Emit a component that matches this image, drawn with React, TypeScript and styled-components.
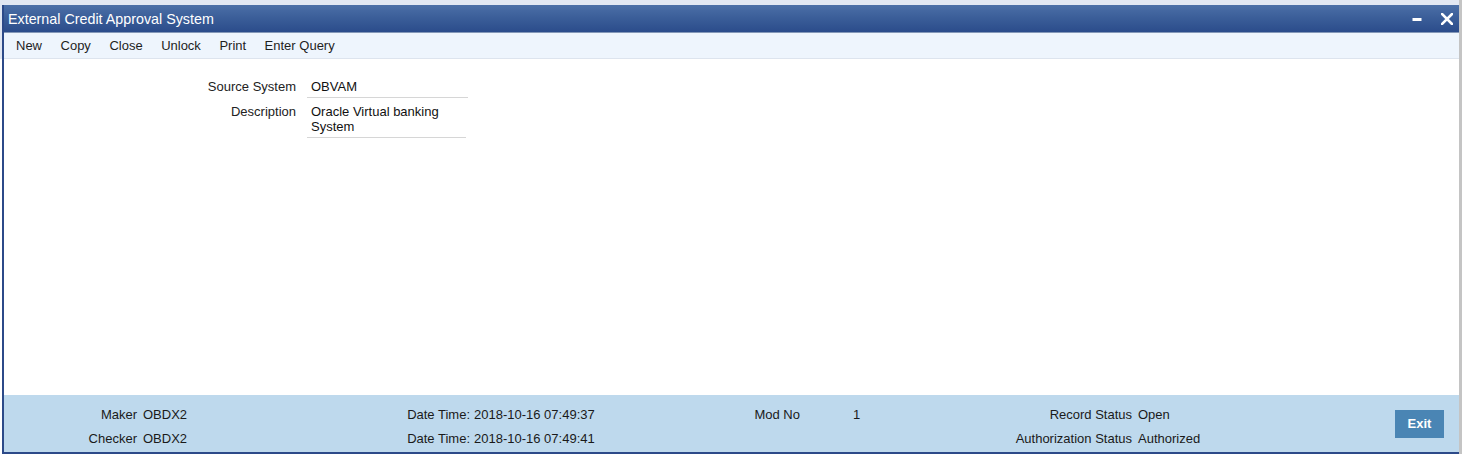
import React from "react";
import styled, { createGlobalStyle } from "styled-components";

const GlobalStyle = createGlobalStyle`
  html, body { margin: 0; padding: 0; }
  body {
    font-family: "Liberation Sans", Arial, sans-serif;
    font-size: 13px;
    color: #1a1a1a;
    background: #ffffff;
  }
`;

const Page = styled.div`
  display: flex;
  width: 1462px;
  height: 454px;
  background: linear-gradient(to bottom, #e1e7f2 0, #e1e7f2 59px, #ffffff 59px);
  overflow: hidden;
`;

const Window = styled.div`
  flex: 1;
  margin: 5px 0 0 2px;
  height: 449px;
  display: flex;
  flex-direction: column;
  border-left: 2px solid #2c4a89;
  border-bottom: 2px solid #2c4a89;
  box-sizing: border-box;
  background: #ffffff;
`;

const SideRule = styled.div`
  width: 3px;
  background: #c4c4c4;
`;

const TitleBar = styled.div`
  height: 27px;
  display: flex;
  align-items: center;
  padding: 0 0 0 4px;
  background: linear-gradient(to bottom, #4b6fa7 0%, #3a5d98 50%, #2b4c8b 100%);
  border-bottom: 1px solid #8498b8;
`;

const Title = styled.div`
  flex: 1;
  color: #ffffff;
  font-size: 14.3px;
  line-height: 16px;
  padding-top: 1px;
`;

const TitleButtons = styled.div`
  display: flex;
  align-items: center;
  gap: 18px;
  padding-right: 6px;
`;

const IconButton = styled.span`
  display: flex;
  width: 12px;
  height: 12px;
  align-items: center;
  justify-content: center;
`;

const Toolbar = styled.div`
  height: 25px;
  display: flex;
  align-items: center;
  padding-left: 12px;
  background: #eef5fd;
  border-bottom: 1px solid #dde4ee;
`;

const MenuItem = styled.span`
  font-size: 13px;
  color: #1e1e1e;
  margin-right: 18.5px;
  line-height: 15px;
`;

const Content = styled.div`
  flex: 1;
  padding-top: 17px;
  display: flex;
  flex-direction: column;
  gap: 3px;
`;

const FormRow = styled.div`
  display: flex;
  align-items: flex-start;
`;

const FieldLabel = styled.div`
  width: 292px;
  text-align: right;
  padding: 3px 0;
  line-height: 15px;
  color: #222;
  flex-shrink: 0;
`;

const FieldValue = styled.div<{ $w: number }>`
  margin-left: 11px;
  width: ${(p) => p.$w}px;
  box-sizing: border-box;
  padding: 3px 4px;
  line-height: 15px;
  border-bottom: 1px solid #d6d6d6;
  color: #111;
  white-space: pre-line;
`;

const Footer = styled.div`
  height: 57px;
  display: flex;
  align-items: center;
  background: #bed9ed;
`;

const FooterGrid = styled.div`
  flex: 1;
  margin-top: 5px;
  display: grid;
  grid-template-columns: 133px 243px 90px 270px 60px 200px 132px 1fr;
  grid-auto-rows: 24px;
  align-items: center;
`;

const FLabel = styled.span`
  text-align: right;
  color: #1a1a1a;
  white-space: nowrap;
`;

const FValue = styled.span<{ $pad: number }>`
  padding-left: ${(p) => p.$pad}px;
  color: #1a1a1a;
  white-space: nowrap;
`;

const ExitButton = styled.button`
  width: 49px;
  height: 28px;
  margin-right: 15px;
  border: none;
  background: #4a85b4;
  color: #ffffff;
  font-family: "Liberation Sans", Arial, sans-serif;
  font-weight: bold;
  font-size: 13px;
  padding: 0;
  cursor: pointer;
`;

const menu = ["New", "Copy", "Close", "Unlock", "Print", "Enter Query"];

export default function App() {
  return (
    <>
      <GlobalStyle />
      <Page>
        <Window>
          <TitleBar>
            <Title>External Credit Approval System</Title>
            <TitleButtons>
              <IconButton>
                <svg width="10" height="12" viewBox="0 0 10 12">
                  <rect x="0.5" y="5" width="9" height="3" fill="#ffffff" />
                </svg>
              </IconButton>
              <IconButton>
                <svg width="12" height="12" viewBox="0 0 12 12">
                  <path
                    d="M1 1 L11 11 M11 1 L1 11"
                    stroke="#ffffff"
                    strokeWidth="2.6"
                    strokeLinecap="square"
                  />
                </svg>
              </IconButton>
            </TitleButtons>
          </TitleBar>
          <Toolbar>
            {menu.map((m) => (
              <MenuItem key={m}>{m}</MenuItem>
            ))}
          </Toolbar>
          <Content>
            <FormRow>
              <FieldLabel>Source System</FieldLabel>
              <FieldValue $w={161}>OBVAM</FieldValue>
            </FormRow>
            <FormRow>
              <FieldLabel>Description</FieldLabel>
              <FieldValue $w={159}>{"Oracle Virtual banking\nSystem"}</FieldValue>
            </FormRow>
          </Content>
          <Footer>
            <FooterGrid>
              <FLabel>Maker</FLabel>
              <FValue $pad={6}>OBDX2</FValue>
              <FLabel>Date Time:</FLabel>
              <FValue $pad={4}>2018-10-16 07:49:37</FValue>
              <FLabel>Mod No</FLabel>
              <FValue $pad={53}>1</FValue>
              <FLabel>Record Status</FLabel>
              <FValue $pad={6}>Open</FValue>

              <FLabel>Checker</FLabel>
              <FValue $pad={6}>OBDX2</FValue>
              <FLabel>Date Time:</FLabel>
              <FValue $pad={4}>2018-10-16 07:49:41</FValue>
              <span />
              <span />
              <FLabel>Authorization Status</FLabel>
              <FValue $pad={6}>Authorized</FValue>
            </FooterGrid>
            <ExitButton>Exit</ExitButton>
          </Footer>
        </Window>
        <SideRule />
      </Page>
    </>
  );
}
